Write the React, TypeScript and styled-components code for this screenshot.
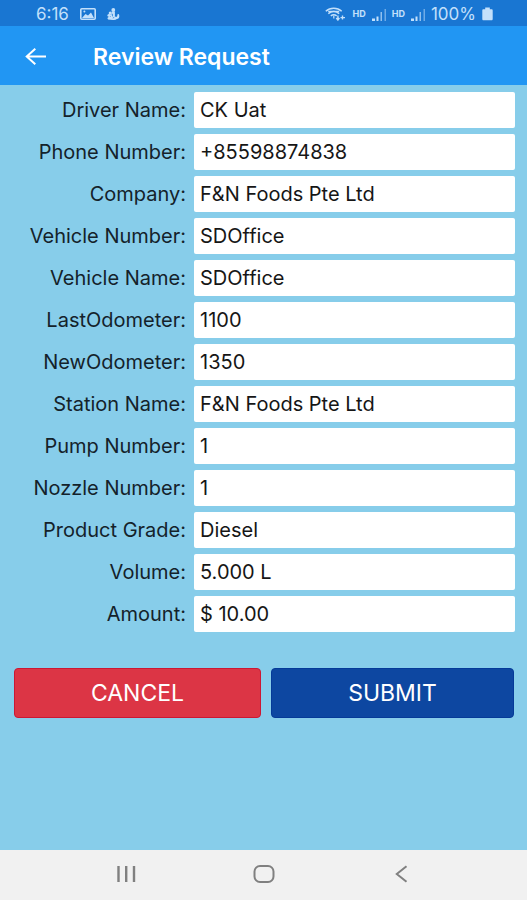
import React from "react";
import styled, { createGlobalStyle } from "styled-components";

const GlobalStyle = createGlobalStyle`
  * { box-sizing: border-box; }
  body {
    margin: 0;
    background: #87cdea;
    font-family: Inter, Roboto, sans-serif;
  }
`;

const Screen = styled.div`
  display: flex;
  flex-direction: column;
  min-height: 100vh;
  background: #87cdea;
`;

const StatusBar = styled.div`
  display: flex;
  align-items: center;
  justify-content: space-between;
  height: 26px;
  padding: 2px 34px 0 36px;
  background: #1976d2;
  color: #c3e0fb;
  font-size: 17px;
  line-height: 24px;
`;

const StatusGroup = styled.div<{ $gap: number }>`
  display: flex;
  align-items: center;
  gap: ${(p) => p.$gap}px;
  svg { display: block; }
`;

const NetworkLabel = styled.span`
  font-size: 9px;
  font-weight: 700;
  line-height: 12px;
`;

const AppBar = styled.header`
  display: flex;
  align-items: center;
  gap: 43px;
  height: 59px;
  padding: 2px 22px 0;
  background: #2196f3;
  color: #fff;
`;

const IconButton = styled.button`
  display: flex;
  align-items: center;
  justify-content: center;
  padding: 0;
  border: 0;
  background: none;
  color: inherit;
  cursor: pointer;
`;

const Title = styled.h1`
  margin: 0;
  font-size: 23px;
  font-weight: 600;
  line-height: 28px;
`;

const Form = styled.form`
  flex: 1;
  padding: 7px 12px 24px;
`;

const Fields = styled.div`
  display: flex;
  flex-direction: column;
  gap: 6px;
`;

const Row = styled.div`
  display: grid;
  grid-template-columns: 174px 1fr;
  column-gap: 8px;
  align-items: center;
`;

const Label = styled.label`
  color: #14222a;
  font-size: 20px;
  line-height: 24px;
  text-align: right;
  white-space: nowrap;
`;

const Field = styled.input`
  width: 100%;
  min-width: 0;
  height: 36px;
  padding: 0 6px;
  border: 0;
  border-radius: 2px;
  background: #fff;
  color: #161616;
  font-family: inherit;
  font-size: 20px;
`;

const Actions = styled.div`
  display: grid;
  grid-template-columns: 62fr 61fr;
  gap: 10px;
  padding: 36px 1px 0 2px;
`;

const ActionButton = styled.button<{ $color: string; $edge: string }>`
  height: 50px;
  padding: 0;
  border: 1px solid ${(p) => p.$edge};
  border-radius: 4px;
  background: ${(p) => p.$color};
  color: #fff;
  font-family: inherit;
  font-size: 23px;
  cursor: pointer;
`;

const NavBar = styled.nav`
  display: flex;
  align-items: center;
  justify-content: center;
  gap: 106px;
  height: 50px;
  padding-bottom: 2px;
  background: #f1f1f1;
  color: #808080;
`;

const fields = [
  { id: "driver", label: "Driver Name:", value: "CK Uat" },
  { id: "phone", label: "Phone Number:", value: "+85598874838" },
  { id: "company", label: "Company:", value: "F&N Foods Pte Ltd" },
  { id: "vehicle-number", label: "Vehicle Number:", value: "SDOffice" },
  { id: "vehicle-name", label: "Vehicle Name:", value: "SDOffice" },
  { id: "last-odometer", label: "LastOdometer:", value: "1100" },
  { id: "new-odometer", label: "NewOdometer:", value: "1350" },
  { id: "station", label: "Station Name:", value: "F&N Foods Pte Ltd" },
  { id: "pump", label: "Pump Number:", value: "1" },
  { id: "nozzle", label: "Nozzle Number:", value: "1" },
  { id: "grade", label: "Product Grade:", value: "Diesel" },
  { id: "volume", label: "Volume:", value: "5.000 L" },
  { id: "amount", label: "Amount:", value: "$ 10.00" },
];

const PictureIcon = () => (
  <svg width="16" height="12" viewBox="0 0 16 12" fill="none" stroke="currentColor" aria-hidden="true">
    <rect x="0.8" y="0.8" width="14.4" height="10.4" rx="1" strokeWidth="1.6" />
    <path d="M2 10 5.500 6l2.500 1.600L11 4.600l3 5.400z" fill="currentColor" stroke="none" />
    <circle cx="4.400" cy="3.600" r="1" fill="currentColor" stroke="none" />
  </svg>
);

const FigureIcon = () => (
  <svg width="13" height="12" viewBox="0 0 13 12" fill="currentColor" aria-hidden="true">
    <circle cx="6.300" cy="2" r="1.900" />
    <circle cx="3.200" cy="4.900" r="1.500" />
    <ellipse cx="2.300" cy="7.500" rx="1.900" ry="1.400" />
    <ellipse cx="3" cy="10.200" rx="2.600" ry="1.500" />
    <path d="M4.800 3.500h3.100v4.800l1.100.8c1.100-.4 1.500-1.300 1.300-2.500l1.500-.5c1.200 2.500.2 4.500-1.900 4.900-1.700 1.300-4.900 1.300-6.500.3z" />
    <path d="M5.500 5.800v2.600M7.300 9.300l-1.500.8" fill="none" stroke="#1976d2" strokeWidth=".7" />
  </svg>
);

const WifiIcon = () => (
  <svg width="21" height="14" viewBox="0 0 21 14" fill="none" stroke="currentColor" strokeWidth="1.500" aria-hidden="true">
    <path d="M.8 4.300C5.300.2 12.200.2 16.700 4.300M3.300 6.600c3.200-2.800 7.700-2.800 10.900 0M5.800 8.800c1.800-1.400 4.100-1.400 5.900 0" />
    <path d="M3.200 4.300h11M8.800 8.500v3" strokeWidth="1.200" />
    <path d="M12.900 8.500v4M11.300 11l1.600 2 1.500-2M17.500 12.500v-4M15.500 10.600h4.500" strokeWidth="1.400" />
  </svg>
);

const SignalIcon = () => (
  <svg width="14" height="13" viewBox="0 0 14 13" fill="currentColor" aria-hidden="true">
    <path d="M0 10.500h3V13H0zM4.500 8.500h2V13h-2z" />
    <path d="M8.500 4H10v9H8.500z" opacity=".7" />
    <path d="M12.500 1H14v12h-1.500z" opacity=".5" />
  </svg>
);

const BatteryIcon = () => (
  <svg width="11" height="14" viewBox="0 0 11 14" fill="currentColor" aria-hidden="true">
    <path d="M3.200.5h4.600v1.700h1.700c.8 0 1.200.4 1.200 1.200v8.600c0 .8-.4 1.300-1.200 1.300h-8c-.8 0-1.200-.5-1.200-1.300V3.400c0-.8.4-1.200 1.200-1.200h1.700z" />
  </svg>
);

const BackArrow = () => (
  <svg width="28" height="24" viewBox="0 0 28 24" fill="none" stroke="currentColor" strokeWidth="2" aria-hidden="true">
    <path d="M24 11.500H5M13.300 3.800 4.700 11.500l8.600 7.700" />
  </svg>
);

const RecentsIcon = () => (
  <svg width="32" height="24" viewBox="0 0 32 24" stroke="currentColor" strokeWidth="2.400" aria-hidden="true">
    <path d="M8.500 4v16M16.200 4v16M24 4v16" />
  </svg>
);

const HomeIcon = () => (
  <svg width="32" height="24" viewBox="0 0 32 24" fill="none" stroke="currentColor" strokeWidth="2" aria-hidden="true">
    <rect x="6.500" y="4" width="19" height="16" rx="5.500" />
  </svg>
);

const BackIcon = () => (
  <svg width="32" height="24" viewBox="0 0 32 24" fill="none" stroke="currentColor" strokeWidth="2" aria-hidden="true">
    <path d="M20.500 4.300 10.800 12l9.700 7.700" />
  </svg>
);

export default function App() {
  return (
    <Screen>
      <GlobalStyle />
      <StatusBar>
        <StatusGroup $gap={11}>
          <span>6:16</span>
          <PictureIcon />
          <FigureIcon />
        </StatusGroup>
        <StatusGroup $gap={6}>
          <WifiIcon />
          <NetworkLabel>HD</NetworkLabel>
          <SignalIcon />
          <NetworkLabel>HD</NetworkLabel>
          <SignalIcon />
          <span>100%</span>
          <BatteryIcon />
        </StatusGroup>
      </StatusBar>
      <AppBar>
        <IconButton type="button" aria-label="Go back">
          <BackArrow />
        </IconButton>
        <Title>Review Request</Title>
      </AppBar>
      <Form onSubmit={(e) => e.preventDefault()}>
        <Fields>
          {fields.map((f) => (
            <Row key={f.id}>
              <Label htmlFor={f.id}>{f.label}</Label>
              <Field id={f.id} type="text" value={f.value} readOnly />
            </Row>
          ))}
        </Fields>
        <Actions>
          <ActionButton type="button" $color="#dc3545" $edge="#cc1734">CANCEL</ActionButton>
          <ActionButton type="submit" $color="#0d47a1" $edge="#053a98">SUBMIT</ActionButton>
        </Actions>
      </Form>
      <NavBar aria-label="System">
        <IconButton type="button" aria-label="Recent apps"><RecentsIcon /></IconButton>
        <IconButton type="button" aria-label="Home"><HomeIcon /></IconButton>
        <IconButton type="button" aria-label="Back"><BackIcon /></IconButton>
      </NavBar>
    </Screen>
  );
}
